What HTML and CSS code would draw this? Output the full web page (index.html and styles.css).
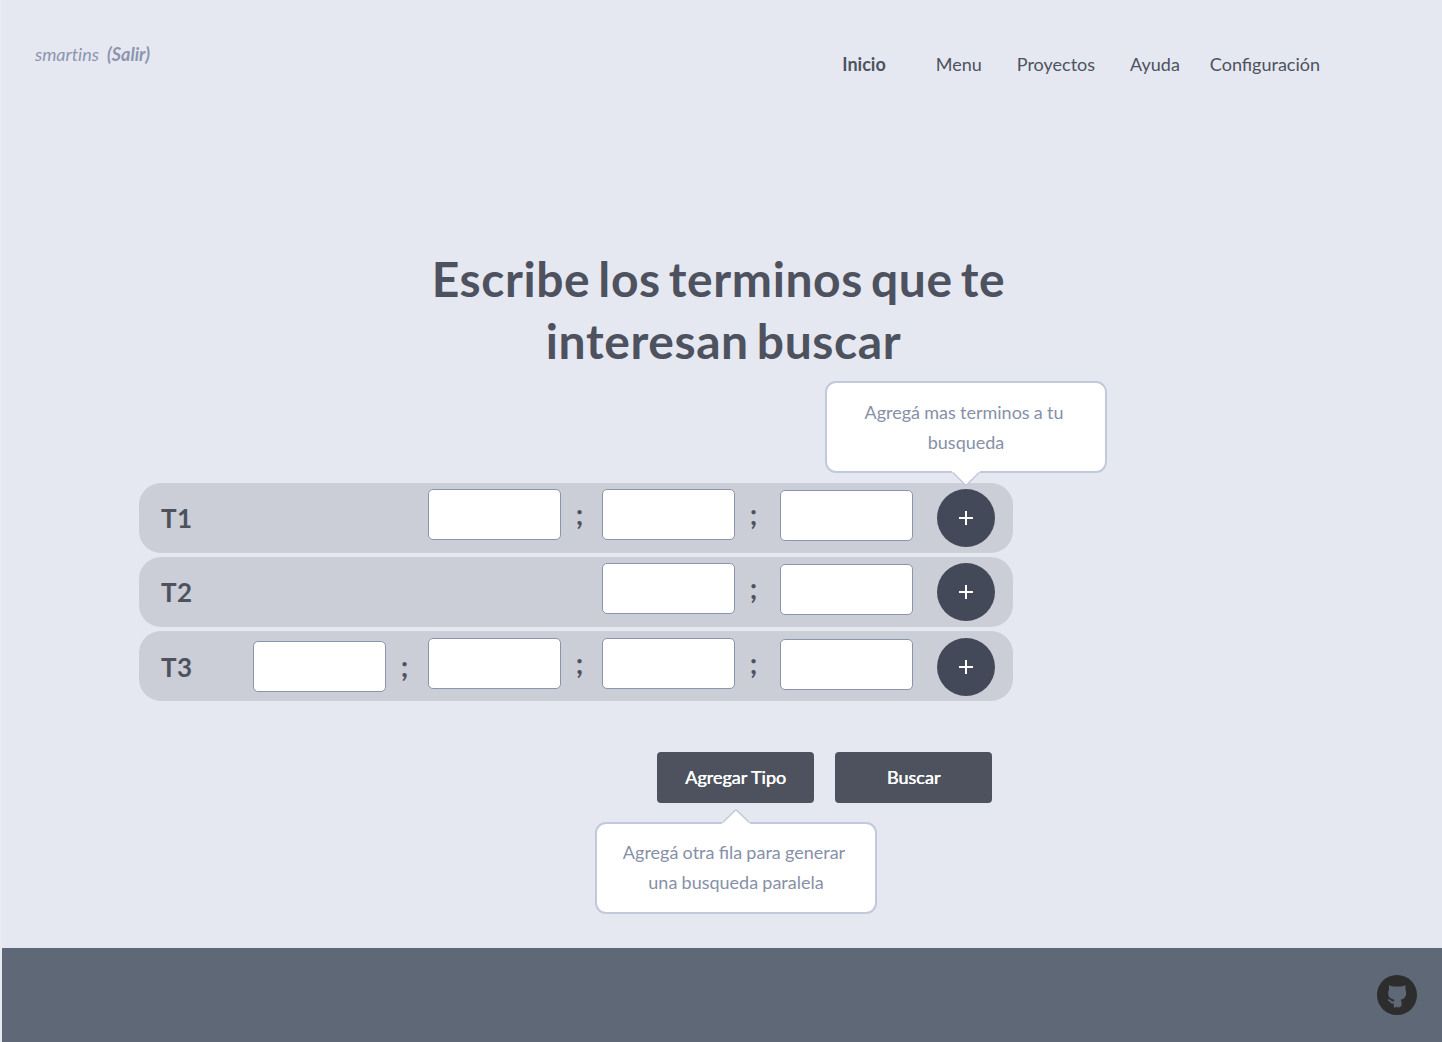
FILE: index.html
```html
<!DOCTYPE html>
<html lang="es">
<head>
<meta charset="utf-8">
<title>Buscar terminos</title>
<link rel="stylesheet" href="styles.css">
</head>
<body>
<div class="page">
  <header class="header">
    <div class="user"><span>smartins</span><a class="logout">(Salir)</a></div>
    <nav class="nav">
      <a class="nav-home">Inicio</a>
      <a class="nav-menu">Menu</a>
      <a class="nav-projects">Proyectos</a>
      <a class="nav-help">Ayuda</a>
      <a>Configuración</a>
    </nav>
  </header>
  <main class="main">
    <h1 class="title"><span class="title-first">Escribe los terminos que te</span><span class="title-second">interesan buscar</span></h1>
    <section class="rows">
      <div class="row">
        <span class="label">T1</span>
        <input class="term c2" type="text"><span class="sep s2">;</span>
        <input class="term c3" type="text"><span class="sep s3">;</span>
        <input class="term c4" type="text">
        <div class="add-wrap">
          <button class="add"><svg width="14" height="14" viewBox="0 0 14 14"><path d="M7 0v14M0 7h14" stroke="#fff" stroke-width="2"/></svg></button>
          <div class="tooltip tooltip-above"><span>Agregá mas terminos a tu</span><span class="tip-end">busqueda</span>
            <svg class="arrow" width="28" height="16" viewBox="0 0 28 16"><path d="M0 0H28V2H27L15 13.5Q14 14.4 13 13.5L1 2H0Z" fill="#fff"/><path d="M.5 1.2L13 13.5Q14 14.4 15 13.5L27.5 1.2" fill="none" stroke="#c1c9db" stroke-width="1.6"/></svg>
          </div>
        </div>
      </div>
      <div class="row">
        <span class="label">T2</span>
        <input class="term c3" type="text"><span class="sep s3">;</span>
        <input class="term c4" type="text">
        <div class="add-wrap">
          <button class="add"><svg width="14" height="14" viewBox="0 0 14 14"><path d="M7 0v14M0 7h14" stroke="#fff" stroke-width="2"/></svg></button>
        </div>
      </div>
      <div class="row row-last">
        <span class="label">T3</span>
        <input class="term c1" type="text"><span class="sep s1">;</span>
        <input class="term c2" type="text"><span class="sep s2">;</span>
        <input class="term c3" type="text"><span class="sep s3">;</span>
        <input class="term c4" type="text">
        <div class="add-wrap">
          <button class="add"><svg width="14" height="14" viewBox="0 0 14 14"><path d="M7 0v14M0 7h14" stroke="#fff" stroke-width="2"/></svg></button>
        </div>
      </div>
    </section>
    <div class="actions">
      <div class="action">
        <button class="btn">Agregar Tipo</button>
        <div class="tooltip tooltip-below"><span>Agregá otra fila para generar</span><span class="tip-end">una busqueda paralela</span>
          <svg class="arrow" width="28" height="16" viewBox="0 0 28 16"><path d="M0 0H28V2H27L15 13.5Q14 14.4 13 13.5L1 2H0Z" fill="#fff"/><path d="M.5 1.2L13 13.5Q14 14.4 15 13.5L27.5 1.2" fill="none" stroke="#c1c9db" stroke-width="1.6"/></svg>
        </div>
      </div>
      <button class="btn">Buscar</button>
    </div>
  </main>
  <footer class="footer">
    <svg width="40" height="40" viewBox="0 0 40 40"><circle cx="20" cy="20" r="20" fill="#2d2d2d"/><path d="M12 10.300L16 11.500H24.500L28.500 10.300V14.500Q29.500 17 29 20Q28 24 23.500 24.700Q24.500 26 24.500 27.500V31.500H23V33L21.700 31.500L20.500 33L19.300 31.500L18 33L16.700 31.500V28.500H14.500L12.500 26.500L10.800 25.500V24.300L13.500 24.800L14.500 26.200H17L17.300 24.700Q12 24 11.200 19.500Q11 16.500 12 14.500Z" fill="#5f6877"/></svg>
  </footer>
</div>
</body>
</html>
```

FILE: styles.css
```css
* { box-sizing: border-box; }
body {
  margin: 0;
  background: #e9ebf3;
  color: #4d525e;
  font: 18px/30px Lato, sans-serif;
}
.page {
  display: flex;
  flex-direction: column;
  height: 1042px;
  margin-left: 2px;
  background: #e5e8f1;
}
.header {
  display: flex;
  justify-content: space-between;
  height: 248px;
  padding: 39px 121px 0 33px;
}
.user {
  display: flex;
  gap: 8px;
  color: #8d95ae;
  font-style: italic;
  font-variant-ligatures: none;
}
.logout { font-weight: 700; }
.nav { display: flex; padding: 10px 1px 0 0; }
.nav-home { margin-right: 50px; font-weight: 700; }
.nav-menu { margin-right: 35px; }
.nav-projects { margin-right: 35px; }
.nav-help { margin-right: 30px; }
.main { flex: 1; padding-left: 137px; }
.title {
  display: flex;
  flex-direction: column;
  width: 580px;
  height: 235px;
  margin: 0 0 0 290px;
  font-size: 48px;
  line-height: 62px;
  letter-spacing: 0.6px;
  word-spacing: -4.2px;
  text-align: center;
  white-space: nowrap;
}
.title-first { padding-right: 1px; }
.title-second { padding-left: 9px; }
.rows { display: grid; gap: 4px; width: 874px; }
.row {
  display: grid;
  grid-template-columns: 114px 133px 42px 133px 41px 133px 45px 133px 24px 58px;
  grid-template-rows: 70px;
  align-items: start;
  height: 70px;
  border-radius: 22px;
  background: #cbcdd7;
}
.row > * { grid-row: 1; }
.row-last { padding-top: 1px; }
.label {
  grid-column: 1;
  padding-left: 22px;
  font-size: 26px;
  font-weight: 700;
  line-height: 70px;
  letter-spacing: 0.4px;
}
.term {
  width: 133px;
  height: 51px;
  margin: 6px 0 0;
  border: 1px solid #8a94ad;
  border-radius: 5px;
  background: #fff;
}
.c1 { grid-column: 2; margin-top: 9px; }
.c2 { grid-column: 4; }
.c3 { grid-column: 6; }
.c4 { grid-column: 8; margin-top: 7px; }
.sep { width: 37px; font-size: 28px; font-weight: 700; line-height: 62px; text-align: center; }
.s1 { grid-column: 3; padding-top: 3px; }
.s2 { grid-column: 5; }
.s3 { grid-column: 7; }
.add-wrap { position: relative; grid-column: 10; margin-top: 6px; }
.add {
  display: flex;
  align-items: center;
  justify-content: center;
  width: 58px;
  height: 58px;
  padding: 0;
  border: 0;
  border-radius: 50%;
  background: #434958;
}
.tooltip {
  position: absolute;
  display: flex;
  flex-direction: column;
  width: 282px;
  height: 92px;
  padding: 14px 4px 0 0;
  border: 2px solid #c1c9db;
  border-radius: 11px;
  background: #fff;
  color: #8790a8;
  text-align: center;
  white-space: nowrap;
  word-spacing: -0.4px;
}
.tip-end { padding-left: 4px; }
.tooltip-above { left: -112px; top: -108px; }
.tooltip-below { left: -62px; top: 70px; padding-top: 13px; }
.arrow { position: absolute; left: 125px; }
.tooltip-above .arrow { bottom: -16px; }
.tooltip-below .arrow { top: -16px; transform: scaleY(-1); }
.actions { display: flex; gap: 21px; padding: 51px 0 0 518px; }
.action { position: relative; }
.btn {
  display: block;
  width: 157px;
  height: 51px;
  padding: 0;
  border: 0;
  border-radius: 4px;
  background: #4d525e;
  color: #fff;
  font: 400 18px/51px Lato, sans-serif;
  text-shadow: 0.5px 0 0 #fff;
}
.footer {
  display: flex;
  justify-content: flex-end;
  height: 94px;
  padding: 27px 25px;
  background: #5f6877;
}
```
